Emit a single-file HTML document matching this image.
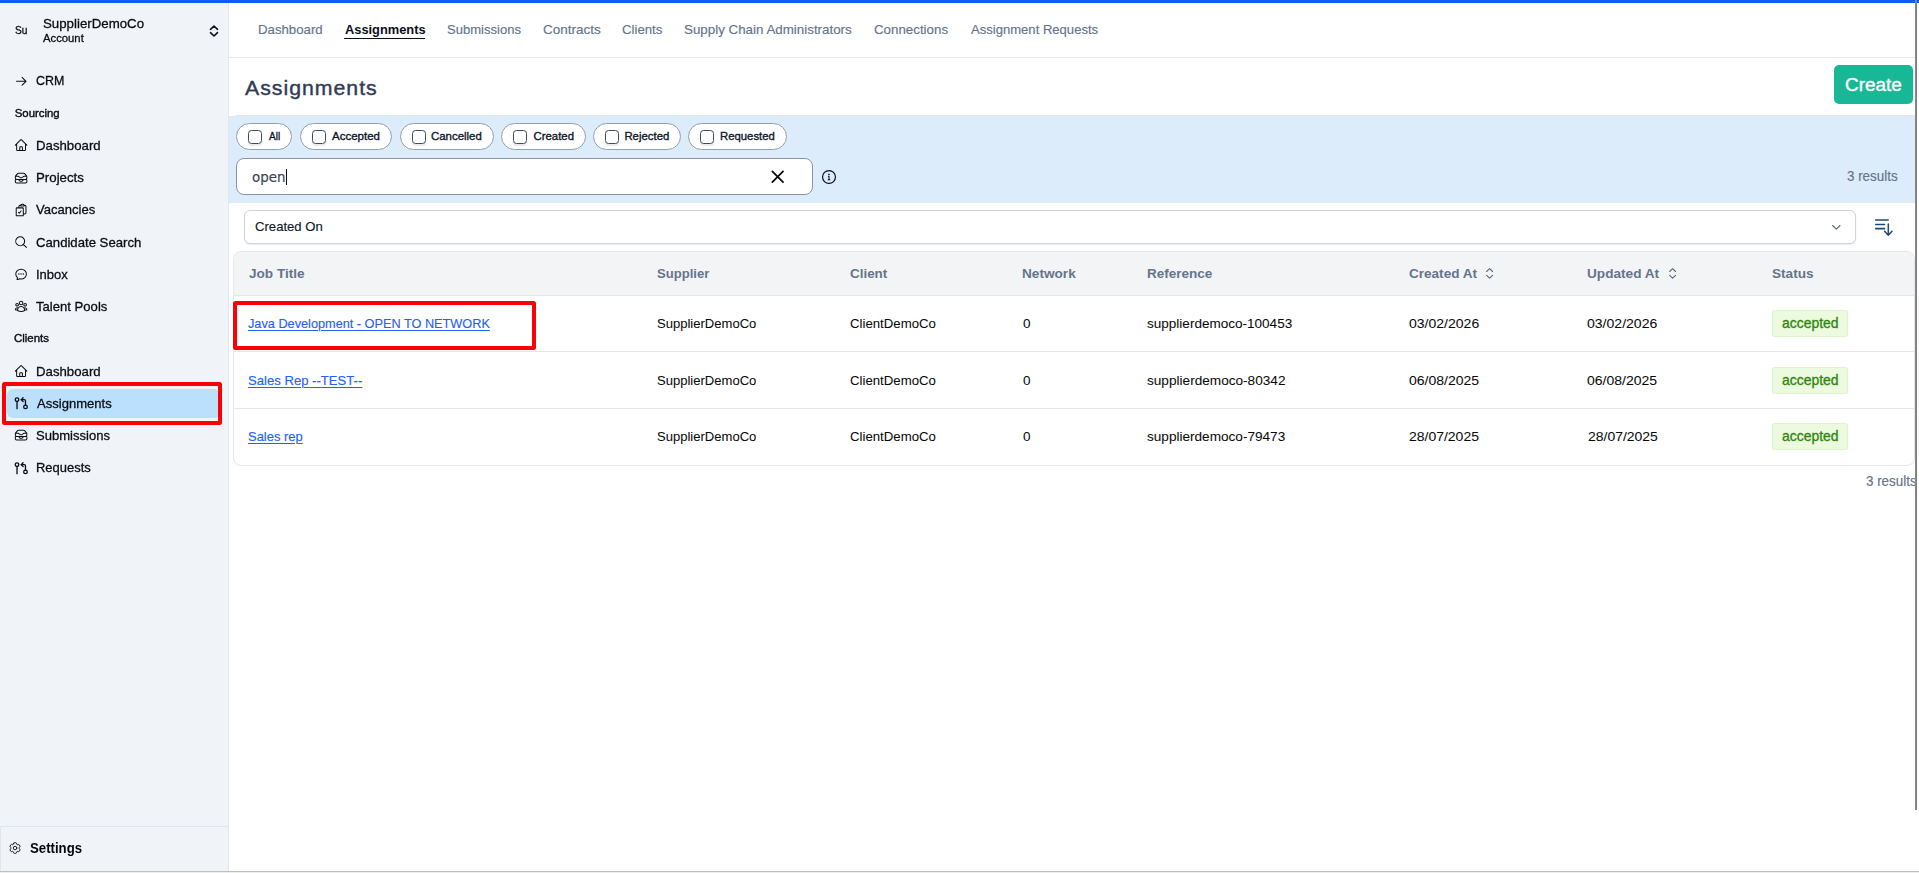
<!DOCTYPE html>
<html lang="en">
<head>
<meta charset="utf-8">
<title>Assignments</title>
<style>
*{box-sizing:border-box;margin:0;padding:0}
html,body{width:1919px;height:873px;overflow:hidden;background:#fff}
body{font-family:"Liberation Sans",sans-serif;color:#0f172a;position:relative}
.a,.t,svg{position:absolute}
.t{white-space:nowrap;z-index:4;transform-origin:0 0}
svg{overflow:visible;fill:none;stroke:currentColor;stroke-linecap:round;stroke-linejoin:round;z-index:3}
.chip{top:123px;height:26.8px;border:1px solid #939eb2;border-radius:14px;background:#fff}
.chip i{position:absolute;left:11px;top:6px;width:14px;height:14px;border:1.1px solid #414c5e;border-radius:3.5px;background:#fff;box-shadow:0 1.5px 1.5px rgba(30,41,59,.10)}
.badge{left:1772px;width:76px;height:26.7px;background:#ecfae0;border:1px solid #def5cf;border-radius:2px}
.hl{border:4.4px solid #fd0005;border-radius:2.5px;z-index:4}
.row{left:233px;width:1682px;height:1px;background:#e5e7eb}
</style>
</head>
<body>
<!-- chrome -->
<div class="a" style="left:0;top:0;width:228.8px;height:871px;background:#f0f4f9;border-right:1.5px solid #e4e7ed"></div>
<div class="a" style="left:0;top:0;width:1919px;height:3px;background:#1457fa;z-index:5"></div>
<div class="a" style="left:1915.3px;top:0;width:1.9px;height:810px;background:linear-gradient(90deg,#8c8c8c,#7a7a7a);z-index:6"></div>
<div class="a" style="left:0;top:870.7px;width:1919px;height:1.2px;background:#c0c0c0"></div><div class="a" style="left:0;top:871.9px;width:1919px;height:1.1px;background:#eeeeee"></div>
<div class="a" style="left:229px;top:57px;width:1686px;height:1px;background:#e5e7eb"></div>
<div class="a" style="left:0;top:826px;width:228px;height:1px;background:#e1e6ee"></div>

<div class="a" style="left:0;top:827px;width:0.8px;height:44px;background:#e1e5ec"></div>
<!-- sidebar active + highlight -->
<div class="a" style="left:7px;top:389px;width:214px;height:28.7px;background:#bae0fd;border-radius:6px"></div>
<div class="a hl" style="left:2.3px;top:382.4px;width:219.5px;height:42.2px"></div>

<!-- nav underline -->
<div class="a" style="left:344px;top:37.5px;width:81px;height:1.2px;background:#0b0f19"></div>

<!-- create button -->
<div class="a" style="left:1834px;top:65px;width:79px;height:39px;background:#18b795;border-radius:5px"></div>

<!-- filter band -->
<div class="a" style="left:236px;top:115px;width:1679px;height:1px;background:#e3e5e9"></div>
<div class="a" style="left:229px;top:116px;width:1686px;height:87px;background:#dcecfb"></div>
<div class="a chip" style="left:236px;width:56px"><i></i></div>
<div class="a chip" style="left:300px;width:92px"><i></i></div>
<div class="a chip" style="left:400px;width:93.5px"><i></i></div>
<div class="a chip" style="left:501px;width:85px"><i></i></div>
<div class="a chip" style="left:593px;width:87.5px"><i></i></div>
<div class="a chip" style="left:688px;width:99px"><i></i></div>

<div class="a" style="left:236px;top:158px;width:577px;height:37px;background:#fff;border:1px solid #8a94a8;border-radius:8px"></div>
<div class="a" style="left:286px;top:168.5px;width:1px;height:16px;background:#111;z-index:3"></div>

<!-- select -->
<div class="a" style="left:244px;top:210px;width:1612px;height:33.5px;background:#fff;border:1px solid #cfd4dc;border-radius:6px;box-shadow:0 1px 1.5px rgba(0,0,0,.08)"></div>

<!-- table -->
<div class="a" style="left:233px;top:251px;width:1682px;height:214.5px;border:1px solid #e5e7eb;border-radius:8px;background:#fff;overflow:hidden">
  <div style="height:44px;background:#f3f4f6"></div>
</div>
<div class="a row" style="top:295px"></div>
<div class="a row" style="top:351px"></div>
<div class="a row" style="top:408px"></div>
<div class="a badge" style="top:310px"></div>
<div class="a badge" style="top:367px"></div>
<div class="a badge" style="top:423.1px"></div>
<div class="a hl" style="left:232.9px;top:301.4px;width:302.8px;height:48.2px"></div>

<div id="tx" style="position:absolute;left:0;top:0;width:228px;height:871px;overflow:hidden;will-change:transform;z-index:3">
<svg viewBox="0 0 24 24" style="left:14.70px;top:74.80px;width:12.6px;height:12.6px;color:#0b0d12;stroke-width:2.0"><path d="M13.5 4.5L21 12m0 0l-7.5 7.5M21 12H3"/></svg>
<svg viewBox="0 0 24 24" style="left:13.70px;top:137.70px;width:14.2px;height:14.2px;color:#0b0d12;stroke-width:1.7"><path d="M2.25 12l8.954-8.955c.44-.439 1.152-.439 1.591 0L21.75 12M4.5 9.75v10.125c0 .621.504 1.125 1.125 1.125H9.75v-4.875c0-.621.504-1.125 1.125-1.125h2.25c.621 0 1.125.504 1.125 1.125V21h4.125c.621 0 1.125-.504 1.125-1.125V9.75M8.25 21h8.25"/></svg>
<svg viewBox="0 0 24 24" style="left:13.70px;top:170.90px;width:14.2px;height:14.2px;color:#0b0d12;stroke-width:1.7"><path d="M7.875 14.25l1.214 1.942a2.25 2.25 0 001.908 1.058h2.006c.776 0 1.497-.4 1.908-1.058l1.214-1.942M2.41 9h4.636a2.25 2.25 0 011.872 1.002l.164.246a2.25 2.25 0 001.872 1.002h2.092a2.25 2.25 0 001.872-1.002l.164-.246A2.25 2.25 0 0116.954 9h4.636M2.41 9a2.25 2.25 0 00-.16.832V12a2.25 2.25 0 002.25 2.25h15A2.25 2.25 0 0021.75 12V9.832c0-.287-.055-.57-.16-.832M2.41 9a2.25 2.25 0 01.382-.632l3.285-3.832a2.25 2.25 0 011.708-.786h8.43c.657 0 1.281.287 1.709.786l3.284 3.832c.163.19.291.404.382.632M4.5 20.25h15A2.25 2.25 0 0021.75 18v-2.625c0-.621-.504-1.125-1.125-1.125H3.375c-.621 0-1.125.504-1.125 1.125V18a2.25 2.25 0 002.25 2.25z"/></svg>
<svg viewBox="0 0 24 24" style="left:13.70px;top:203.30px;width:14.2px;height:14.2px;color:#0b0d12;stroke-width:1.7"><path d="M11.35 3.836c-.065.21-.1.433-.1.664 0 .414.336.75.75.75h4.5a.75.75 0 00.75-.75 2.25 2.25 0 00-.1-.664m-5.8 0A2.251 2.251 0 0113.5 2.25H15c1.012 0 1.867.668 2.15 1.586m-5.8 0c-.376.023-.75.05-1.124.08C9.095 4.01 8.25 4.973 8.25 6.108V8.25m8.9-4.414c.376.023.75.05 1.124.08 1.131.094 1.976 1.057 1.976 2.192V16.5A2.25 2.25 0 0118 18.75h-2.25m-7.5-10.5H4.875c-.621 0-1.125.504-1.125 1.125v11.25c0 .621.504 1.125 1.125 1.125h9.75c.621 0 1.125-.504 1.125-1.125V18.75m-7.5-10.5h6.375c.621 0 1.125.504 1.125 1.125v9.375m-8.25-3l1.5 1.5 3-3.75"/></svg>
<svg viewBox="0 0 24 24" style="left:13.70px;top:234.50px;width:14.2px;height:14.2px;color:#0b0d12;stroke-width:1.7"><path d="M21 21l-5.197-5.197m0 0A7.5 7.5 0 105.196 5.196a7.5 7.5 0 0010.607 10.607z"/></svg>
<svg viewBox="0 0 24 24" style="left:13.70px;top:266.70px;width:14.2px;height:14.2px;color:#0b0d12;stroke-width:1.7"><path d="M8.625 12a.375.375 0 11-.75 0 .375.375 0 01.75 0zm0 0H8.25m4.125 0a.375.375 0 11-.75 0 .375.375 0 01.75 0zm0 0H12m4.125 0a.375.375 0 11-.75 0 .375.375 0 01.75 0zm0 0h-.375M21 12c0 4.556-4.03 8.25-9 8.25a9.764 9.764 0 01-2.555-.337A5.972 5.972 0 015.41 20.97a5.969 5.969 0 01-.474-.065 4.48 4.48 0 00.978-2.025c.09-.457-.133-.901-.467-1.226C3.93 16.178 3 14.189 3 12c0-4.556 4.03-8.25 9-8.25s9 3.694 9 8.25z"/></svg>
<svg viewBox="0 0 24 24" style="left:13.70px;top:298.80px;width:14.2px;height:14.2px;color:#0b0d12;stroke-width:1.7"><path d="M18 18.72a9.094 9.094 0 003.741-.479 3 3 0 00-4.682-2.72m.94 3.198l.001.031c0 .225-.012.447-.037.666A11.944 11.944 0 0112 21c-2.17 0-4.207-.576-5.963-1.584A6.062 6.062 0 016 18.719m12 0a5.971 5.971 0 00-.941-3.197m0 0A5.995 5.995 0 0012 12.75a5.995 5.995 0 00-5.058 2.772m0 0a3 3 0 00-4.681 2.72 8.986 8.986 0 003.74.477m.94-3.197a5.971 5.971 0 00-.94 3.197M15 6.75a3 3 0 11-6 0 3 3 0 016 0zm6 3a2.25 2.25 0 11-4.5 0 2.25 2.25 0 014.5 0zm-13.5 0a2.25 2.25 0 11-4.5 0 2.25 2.25 0 014.5 0z"/></svg>
<svg viewBox="0 0 24 24" style="left:13.70px;top:363.80px;width:14.2px;height:14.2px;color:#0b0d12;stroke-width:1.7"><path d="M2.25 12l8.954-8.955c.44-.439 1.152-.439 1.591 0L21.75 12M4.5 9.75v10.125c0 .621.504 1.125 1.125 1.125H9.75v-4.875c0-.621.504-1.125 1.125-1.125h2.25c.621 0 1.125.504 1.125 1.125V21h4.125c.621 0 1.125-.504 1.125-1.125V9.75M8.25 21h8.25"/></svg>
<svg viewBox="0 0 24 24" style="left:14.25px;top:396.15px;width:14.5px;height:14.5px;color:#0b0d12;stroke-width:2.2"><circle cx="5" cy="6" r="3"/><path d="M5 9v12"/><circle cx="19" cy="18" r="3"/><path d="m15 9-3-3 3-3"/><path d="M12 6h5a2 2 0 0 1 2 2v7"/></svg>
<svg viewBox="0 0 24 24" style="left:13.70px;top:428.00px;width:14.2px;height:14.2px;color:#0b0d12;stroke-width:1.7"><path d="M7.875 14.25l1.214 1.942a2.25 2.25 0 001.908 1.058h2.006c.776 0 1.497-.4 1.908-1.058l1.214-1.942M2.41 9h4.636a2.25 2.25 0 011.872 1.002l.164.246a2.25 2.25 0 001.872 1.002h2.092a2.25 2.25 0 001.872-1.002l.164-.246A2.25 2.25 0 0116.954 9h4.636M2.41 9a2.25 2.25 0 00-.16.832V12a2.25 2.25 0 002.25 2.25h15A2.25 2.25 0 0021.75 12V9.832c0-.287-.055-.57-.16-.832M2.41 9a2.25 2.25 0 01.382-.632l3.285-3.832a2.25 2.25 0 011.708-.786h8.43c.657 0 1.281.287 1.709.786l3.284 3.832c.163.19.291.404.382.632M4.5 20.25h15A2.25 2.25 0 0021.75 18v-2.625c0-.621-.504-1.125-1.125-1.125H3.375c-.621 0-1.125.504-1.125 1.125V18a2.25 2.25 0 002.25 2.25z"/></svg>
<svg viewBox="0 0 24 24" style="left:14.25px;top:460.85px;width:14.5px;height:14.5px;color:#0b0d12;stroke-width:2.2"><circle cx="5" cy="6" r="3"/><path d="M5 9v12"/><circle cx="19" cy="18" r="3"/><path d="m15 9-3-3 3-3"/><path d="M12 6h5a2 2 0 0 1 2 2v7"/></svg>
<svg viewBox="0 0 24 24" style="left:8.20px;top:840.95px;width:14.1px;height:14.1px;color:#0b0d12;stroke-width:1.6"><path d="M9.594 3.94c.09-.542.56-.94 1.11-.94h2.593c.55 0 1.02.398 1.11.94l.213 1.281c.063.374.313.686.645.87.074.04.147.083.22.127.324.196.72.257 1.075.124l1.217-.456a1.125 1.125 0 011.37.49l1.296 2.247a1.125 1.125 0 01-.26 1.431l-1.003.827c-.293.24-.438.613-.431.992a6.759 6.759 0 010 .255c-.007.378.138.75.43.99l1.005.828c.424.35.534.954.26 1.43l-1.298 2.247a1.125 1.125 0 01-1.369.491l-1.217-.456c-.355-.133-.75-.072-1.076.124a6.57 6.57 0 01-.22.128c-.331.183-.581.495-.644.869l-.213 1.28c-.09.543-.56.941-1.11.941h-2.594c-.55 0-1.02-.398-1.11-.94l-.213-1.281c-.062-.374-.312-.686-.644-.87a6.52 6.52 0 01-.22-.127c-.325-.196-.72-.257-1.076-.124l-1.217.456a1.125 1.125 0 01-1.369-.49l-1.297-2.247a1.125 1.125 0 01.26-1.431l1.004-.827c.292-.24.437-.613.43-.992a6.932 6.932 0 010-.255c.007-.378-.138-.75-.43-.99l-1.004-.828a1.125 1.125 0 01-.26-1.43l1.297-2.247a1.125 1.125 0 011.37-.491l1.216.456c.356.133.751.072 1.076-.124.072-.044.146-.087.22-.128.332-.183.582-.495.644-.869l.214-1.281z M15 12a3 3 0 11-6 0 3 3 0 016 0z"/></svg>
<svg viewBox="0 0 10 12" style="left:209.3px;top:25.2px;width:10px;height:12px;color:#0b0f19;stroke-width:1.6"><path d="M1.5 4.3 5 1 8.5 4.3M1.5 7.7 5 11 8.5 7.7"/></svg>
<div class="t" style='left:15.00px;top:24.75px;font-size:10.9px;line-height:10.9px;color:#0b0d12;font-family:"Liberation Sans",sans-serif;transform:scaleX(0.9342);-webkit-text-stroke:0.3px #0b0d12;'>Su</div>
<div class="t" style='left:42.65px;top:17.00px;font-size:13.5px;line-height:13.5px;color:#0b0d12;font-family:"Liberation Sans",sans-serif;transform:scaleX(0.9829);-webkit-text-stroke:0.3px #0b0d12;'>SupplierDemoCo</div>
<div class="t" style='left:43.15px;top:32.80px;font-size:11.4px;line-height:11.4px;color:#0b0d12;font-family:"Liberation Sans",sans-serif;transform:scaleX(0.9904);-webkit-text-stroke:0.3px #0b0d12;'>Account</div>
<div class="t" style='left:36.05px;top:74.00px;font-size:13.5px;line-height:13.5px;color:#0b0d12;font-family:"Liberation Sans",sans-serif;transform:scaleX(0.9239);-webkit-text-stroke:0.3px #0b0d12;'>CRM</div>
<div class="t" style='left:14.75px;top:108.20px;font-size:11.4px;line-height:11.4px;color:#0b0d12;font-family:"Liberation Sans",sans-serif;-webkit-text-stroke:0.4px #0b0d12;'>Sourcing</div>
<div class="t" style='left:35.95px;top:139.10px;font-size:13.5px;line-height:13.5px;color:#0b0d12;font-family:"Liberation Sans",sans-serif;transform:scaleX(0.9790);-webkit-text-stroke:0.3px #0b0d12;'>Dashboard</div>
<div class="t" style='left:35.95px;top:171.10px;font-size:13.5px;line-height:13.5px;color:#0b0d12;font-family:"Liberation Sans",sans-serif;transform:scaleX(0.9830);-webkit-text-stroke:0.3px #0b0d12;'>Projects</div>
<div class="t" style='left:36.15px;top:203.10px;font-size:13.5px;line-height:13.5px;color:#0b0d12;font-family:"Liberation Sans",sans-serif;transform:scaleX(0.9667);-webkit-text-stroke:0.3px #0b0d12;'>Vacancies</div>
<div class="t" style='left:35.65px;top:235.60px;font-size:13.5px;line-height:13.5px;color:#0b0d12;font-family:"Liberation Sans",sans-serif;transform:scaleX(0.9743);-webkit-text-stroke:0.3px #0b0d12;'>Candidate Search</div>
<div class="t" style='left:35.95px;top:267.80px;font-size:13.5px;line-height:13.5px;color:#0b0d12;font-family:"Liberation Sans",sans-serif;transform:scaleX(0.9643);-webkit-text-stroke:0.3px #0b0d12;'>Inbox</div>
<div class="t" style='left:36.40px;top:299.90px;font-size:13.5px;line-height:13.5px;color:#0b0d12;font-family:"Liberation Sans",sans-serif;transform:scaleX(0.9701);-webkit-text-stroke:0.3px #0b0d12;'>Talent Pools</div>
<div class="t" style='left:14.25px;top:332.60px;font-size:11.4px;line-height:11.4px;color:#0b0d12;font-family:"Liberation Sans",sans-serif;transform:scaleX(1.0050);-webkit-text-stroke:0.4px #0b0d12;'>Clients</div>
<div class="t" style='left:35.95px;top:365.00px;font-size:13.5px;line-height:13.5px;color:#0b0d12;font-family:"Liberation Sans",sans-serif;transform:scaleX(0.9790);-webkit-text-stroke:0.3px #0b0d12;'>Dashboard</div>
<div class="t" style='left:36.55px;top:397.00px;font-size:13.5px;line-height:13.5px;color:#0b0d12;font-family:"Liberation Sans",sans-serif;transform:scaleX(0.9671);-webkit-text-stroke:0.3px #0b0d12;'>Assignments</div>
<div class="t" style='left:36.45px;top:429.00px;font-size:13.5px;line-height:13.5px;color:#0b0d12;font-family:"Liberation Sans",sans-serif;transform:scaleX(0.9656);-webkit-text-stroke:0.3px #0b0d12;'>Submissions</div>
<div class="t" style='left:35.95px;top:460.90px;font-size:13.5px;line-height:13.5px;color:#0b0d12;font-family:"Liberation Sans",sans-serif;transform:scaleX(0.9598);-webkit-text-stroke:0.3px #0b0d12;'>Requests</div>
<div class="t" style='left:30.45px;top:841.00px;font-size:14.4px;line-height:14.4px;color:#050608;font-family:"Liberation Sans",sans-serif;font-weight:bold;transform:scaleX(0.9167);'>Settings</div>
</div>
<svg viewBox="0 0 24 24" style="left:767.00px;top:165.90px;width:21.4px;height:21.4px;color:#050505;stroke-width:1.9"><path d="M6 18L18 6M6 6l12 12"/></svg>
<svg viewBox="0 0 16 16" style="left:821px;top:168.9px;width:16px;height:16px;color:#0b0f19;stroke-width:1.2"><circle cx="8" cy="8" r="6.45"/><path d="M7.4 7.3H8v3.4M7.2 10.8h1.7" stroke-width="1.05"/><circle cx="7.9" cy="5.3" r=".5" fill="currentColor" stroke-width=".5"/></svg>
<svg viewBox="0 0 10 6" style="left:1831.8px;top:224.8px;width:8.6px;height:5px;color:#5f6673;stroke-width:1.35"><path d="M.6.6 5 5 9.4.6"/></svg>
<svg viewBox="0 0 20 18" style="left:1874px;top:218px;width:20px;height:18px;color:#1f4a6e;stroke-width:1.55;stroke-linecap:butt"><path d="M1.1 1.9H14.8M1.1 6.4H11.2M1.1 10.6H11.2" /><path d="M14.3 6v11M10.6 13.3l3.7 3.9 3.7-3.9" stroke-width="1.5" stroke-linecap="round"/></svg>
<svg viewBox="0 0 8 12" style="left:1486.4px;top:267.5px;width:7.2px;height:10.8px;color:#5b677a;stroke-width:1.2"><path d="M.7 3.9 4 .7 7.3 3.9M.7 8.1 4 11.3 7.3 8.1"/></svg>
<svg viewBox="0 0 8 12" style="left:1669.1px;top:267.5px;width:7.2px;height:10.8px;color:#5b677a;stroke-width:1.2"><path d="M.7 3.9 4 .7 7.3 3.9M.7 8.1 4 11.3 7.3 8.1"/></svg>
<div class="t" style='left:257.55px;top:22.90px;font-size:13.5px;line-height:13.5px;color:#64748b;font-family:"Liberation Sans",sans-serif;transform:scaleX(0.9790);-webkit-text-stroke:0.15px #64748b;'>Dashboard</div>
<div class="t" style='left:344.80px;top:22.90px;font-size:13.5px;line-height:13.5px;color:#0b0f19;font-family:"Liberation Sans",sans-serif;font-weight:bold;transform:scaleX(0.9507);'>Assignments</div>
<div class="t" style='left:447.05px;top:22.90px;font-size:13.5px;line-height:13.5px;color:#64748b;font-family:"Liberation Sans",sans-serif;transform:scaleX(0.9656);-webkit-text-stroke:0.15px #64748b;'>Submissions</div>
<div class="t" style='left:542.55px;top:22.90px;font-size:13.5px;line-height:13.5px;color:#64748b;font-family:"Liberation Sans",sans-serif;transform:scaleX(1.0012);-webkit-text-stroke:0.15px #64748b;'>Contracts</div>
<div class="t" style='left:622.05px;top:22.90px;font-size:13.5px;line-height:13.5px;color:#64748b;font-family:"Liberation Sans",sans-serif;transform:scaleX(0.9790);-webkit-text-stroke:0.15px #64748b;'>Clients</div>
<div class="t" style='left:684.25px;top:22.90px;font-size:13.5px;line-height:13.5px;color:#64748b;font-family:"Liberation Sans",sans-serif;transform:scaleX(0.9891);-webkit-text-stroke:0.15px #64748b;'>Supply Chain Administrators</div>
<div class="t" style='left:874.25px;top:22.90px;font-size:13.5px;line-height:13.5px;color:#64748b;font-family:"Liberation Sans",sans-serif;transform:scaleX(0.9865);-webkit-text-stroke:0.15px #64748b;'>Connections</div>
<div class="t" style='left:970.75px;top:22.90px;font-size:13.5px;line-height:13.5px;color:#64748b;font-family:"Liberation Sans",sans-serif;transform:scaleX(0.9678);-webkit-text-stroke:0.15px #64748b;'>Assignment Requests</div>
<div class="t" style='left:244.50px;top:77.70px;font-size:20px;line-height:20px;color:#303c54;font-family:"Liberation Sans",sans-serif;letter-spacing:0.941px;transform:scaleX(1.0630);-webkit-text-stroke:0.4px #303c54;'>Assignments</div>
<div class="t" style='left:1845.10px;top:75.90px;font-size:18px;line-height:18px;color:#ffffff;font-family:"Liberation Sans",sans-serif;transform:scaleX(1.0532);-webkit-text-stroke:0.35px #ffffff;z-index:3'>Create</div>
<div class="t" style='left:268.70px;top:131.00px;font-size:11.4px;line-height:11.4px;color:#0f172a;font-family:"Liberation Sans",sans-serif;transform:scaleX(0.8827);-webkit-text-stroke:0.35px #0f172a;z-index:3'>All</div>
<div class="t" style='left:331.90px;top:131.00px;font-size:11.4px;line-height:11.4px;color:#0f172a;font-family:"Liberation Sans",sans-serif;transform:scaleX(1.0096);-webkit-text-stroke:0.35px #0f172a;z-index:3'>Accepted</div>
<div class="t" style='left:430.80px;top:131.00px;font-size:11.4px;line-height:11.4px;color:#0f172a;font-family:"Liberation Sans",sans-serif;transform:scaleX(1.0035);-webkit-text-stroke:0.35px #0f172a;z-index:3'>Cancelled</div>
<div class="t" style='left:533.45px;top:131.00px;font-size:11.4px;line-height:11.4px;color:#0f172a;font-family:"Liberation Sans",sans-serif;-webkit-text-stroke:0.35px #0f172a;z-index:3'>Created</div>
<div class="t" style='left:624.40px;top:131.00px;font-size:11.4px;line-height:11.4px;color:#0f172a;font-family:"Liberation Sans",sans-serif;-webkit-text-stroke:0.35px #0f172a;z-index:3'>Rejected</div>
<div class="t" style='left:720.30px;top:131.00px;font-size:11.4px;line-height:11.4px;color:#0f172a;font-family:"Liberation Sans",sans-serif;transform:scaleX(0.9944);-webkit-text-stroke:0.35px #0f172a;z-index:3'>Requested</div>
<div class="t" style='left:252.30px;top:170.50px;font-size:13.9px;line-height:13.9px;color:#3b4453;font-family:"DejaVu Sans","Liberation Sans",sans-serif;transform:scaleX(0.9655);-webkit-text-stroke:0.15px #3b4453;z-index:3'>open</div>
<div class="t" style='left:1847.45px;top:170.10px;font-size:13.9px;line-height:13.9px;color:#64748b;font-family:"Liberation Sans",sans-serif;transform:scaleX(0.9638);-webkit-text-stroke:0.15px #64748b;'>3 results</div>
<div class="t" style='left:255.45px;top:219.90px;font-size:13.5px;line-height:13.5px;color:#111827;font-family:"Liberation Sans",sans-serif;transform:scaleX(0.9714);-webkit-text-stroke:0.15px #111827;z-index:3'>Created On</div>
<div class="t" style='left:248.80px;top:267.00px;font-size:13.5px;line-height:13.5px;color:#64748b;font-family:"Liberation Sans",sans-serif;font-weight:bold;transform:scaleX(1.0070);z-index:3'>Job Title</div>
<div class="t" style='left:657.05px;top:267.00px;font-size:13.5px;line-height:13.5px;color:#64748b;font-family:"Liberation Sans",sans-serif;font-weight:bold;transform:scaleX(0.9683);z-index:3'>Supplier</div>
<div class="t" style='left:850.17px;top:267.00px;font-size:13.5px;line-height:13.5px;color:#64748b;font-family:"Liberation Sans",sans-serif;font-weight:bold;transform:scaleX(0.9943);z-index:3'>Client</div>
<div class="t" style='left:1022.35px;top:267.00px;font-size:13.5px;line-height:13.5px;color:#64748b;font-family:"Liberation Sans",sans-serif;font-weight:bold;transform:scaleX(1.0082);z-index:3'>Network</div>
<div class="t" style='left:1146.55px;top:267.00px;font-size:13.5px;line-height:13.5px;color:#64748b;font-family:"Liberation Sans",sans-serif;font-weight:bold;transform:scaleX(1.0016);z-index:3'>Reference</div>
<div class="t" style='left:1408.65px;top:267.00px;font-size:13.5px;line-height:13.5px;color:#64748b;font-family:"Liberation Sans",sans-serif;font-weight:bold;transform:scaleX(1.0035);z-index:3'>Created At</div>
<div class="t" style='left:1587.30px;top:267.00px;font-size:13.5px;line-height:13.5px;color:#64748b;font-family:"Liberation Sans",sans-serif;font-weight:bold;transform:scaleX(1.0084);z-index:3'>Updated At</div>
<div class="t" style='left:1772.45px;top:267.00px;font-size:13.5px;line-height:13.5px;color:#64748b;font-family:"Liberation Sans",sans-serif;font-weight:bold;transform:scaleX(1.0069);z-index:3'>Status</div>
<div class="t" style='left:248.20px;top:316.80px;font-size:13.5px;line-height:13.5px;color:#1f62f5;font-family:"Liberation Sans",sans-serif;transform:scaleX(0.9419);-webkit-text-stroke:0.15px #1f62f5;z-index:3;text-decoration:underline;text-decoration-thickness:1px;text-underline-offset:1.6px'>Java Development - OPEN TO NETWORK</div>
<div class="t" style='left:657.05px;top:316.80px;font-size:13.5px;line-height:13.5px;color:#0a0a0a;font-family:"Liberation Sans",sans-serif;transform:scaleX(0.9663);-webkit-text-stroke:0.05px #0a0a0a;z-index:3'>SupplierDemoCo</div>
<div class="t" style='left:850.17px;top:316.80px;font-size:13.5px;line-height:13.5px;color:#0a0a0a;font-family:"Liberation Sans",sans-serif;transform:scaleX(0.9784);-webkit-text-stroke:0.05px #0a0a0a;z-index:3'>ClientDemoCo</div>
<div class="t" style='left:1022.85px;top:316.80px;font-size:13.5px;line-height:13.5px;color:#0a0a0a;font-family:"Liberation Sans",sans-serif;transform:scaleX(0.9988);-webkit-text-stroke:0.05px #0a0a0a;z-index:3'>0</div>
<div class="t" style='left:1146.65px;top:316.80px;font-size:13.5px;line-height:13.5px;color:#0a0a0a;font-family:"Liberation Sans",sans-serif;transform:scaleX(1.0024);-webkit-text-stroke:0.05px #0a0a0a;z-index:3'>supplierdemoco-100453</div>
<div class="t" style='left:1408.85px;top:316.80px;font-size:13.5px;line-height:13.5px;color:#0a0a0a;font-family:"Liberation Sans",sans-serif;transform:scaleX(1.0388);-webkit-text-stroke:0.05px #0a0a0a;z-index:3'>03/02/2026</div>
<div class="t" style='left:1587.45px;top:316.80px;font-size:13.5px;line-height:13.5px;color:#0a0a0a;font-family:"Liberation Sans",sans-serif;transform:scaleX(1.0403);-webkit-text-stroke:0.05px #0a0a0a;z-index:3'>03/02/2026</div>
<div class="t" style='left:1781.65px;top:316.80px;font-size:13.9px;line-height:13.9px;color:#2f8509;font-family:"Liberation Sans",sans-serif;transform:scaleX(1.0038);-webkit-text-stroke:0.3px #2f8509;z-index:3'>accepted</div>
<div class="t" style='left:248.45px;top:373.75px;font-size:13.5px;line-height:13.5px;color:#1f62f5;font-family:"Liberation Sans",sans-serif;transform:scaleX(0.9709);-webkit-text-stroke:0.15px #1f62f5;z-index:3;text-decoration:underline;text-decoration-thickness:1px;text-underline-offset:1.6px'>Sales Rep --TEST--</div>
<div class="t" style='left:657.05px;top:373.75px;font-size:13.5px;line-height:13.5px;color:#0a0a0a;font-family:"Liberation Sans",sans-serif;transform:scaleX(0.9663);-webkit-text-stroke:0.05px #0a0a0a;z-index:3'>SupplierDemoCo</div>
<div class="t" style='left:850.17px;top:373.75px;font-size:13.5px;line-height:13.5px;color:#0a0a0a;font-family:"Liberation Sans",sans-serif;transform:scaleX(0.9784);-webkit-text-stroke:0.05px #0a0a0a;z-index:3'>ClientDemoCo</div>
<div class="t" style='left:1022.85px;top:373.75px;font-size:13.5px;line-height:13.5px;color:#0a0a0a;font-family:"Liberation Sans",sans-serif;transform:scaleX(0.9988);-webkit-text-stroke:0.05px #0a0a0a;z-index:3'>0</div>
<div class="t" style='left:1146.65px;top:373.75px;font-size:13.5px;line-height:13.5px;color:#0a0a0a;font-family:"Liberation Sans",sans-serif;transform:scaleX(1.0081);-webkit-text-stroke:0.05px #0a0a0a;z-index:3'>supplierdemoco-80342</div>
<div class="t" style='left:1408.85px;top:373.75px;font-size:13.5px;line-height:13.5px;color:#0a0a0a;font-family:"Liberation Sans",sans-serif;transform:scaleX(1.0381);-webkit-text-stroke:0.05px #0a0a0a;z-index:3'>06/08/2025</div>
<div class="t" style='left:1587.45px;top:373.75px;font-size:13.5px;line-height:13.5px;color:#0a0a0a;font-family:"Liberation Sans",sans-serif;transform:scaleX(1.0358);-webkit-text-stroke:0.05px #0a0a0a;z-index:3'>06/08/2025</div>
<div class="t" style='left:1781.65px;top:373.75px;font-size:13.9px;line-height:13.9px;color:#2f8509;font-family:"Liberation Sans",sans-serif;transform:scaleX(1.0038);-webkit-text-stroke:0.3px #2f8509;z-index:3'>accepted</div>
<div class="t" style='left:248.45px;top:429.75px;font-size:13.5px;line-height:13.5px;color:#1f62f5;font-family:"Liberation Sans",sans-serif;transform:scaleX(0.9589);-webkit-text-stroke:0.15px #1f62f5;z-index:3;text-decoration:underline;text-decoration-thickness:1px;text-underline-offset:1.6px'>Sales rep</div>
<div class="t" style='left:657.05px;top:429.75px;font-size:13.5px;line-height:13.5px;color:#0a0a0a;font-family:"Liberation Sans",sans-serif;transform:scaleX(0.9663);-webkit-text-stroke:0.05px #0a0a0a;z-index:3'>SupplierDemoCo</div>
<div class="t" style='left:850.17px;top:429.75px;font-size:13.5px;line-height:13.5px;color:#0a0a0a;font-family:"Liberation Sans",sans-serif;transform:scaleX(0.9784);-webkit-text-stroke:0.05px #0a0a0a;z-index:3'>ClientDemoCo</div>
<div class="t" style='left:1022.85px;top:429.75px;font-size:13.5px;line-height:13.5px;color:#0a0a0a;font-family:"Liberation Sans",sans-serif;transform:scaleX(0.9988);-webkit-text-stroke:0.05px #0a0a0a;z-index:3'>0</div>
<div class="t" style='left:1146.65px;top:429.75px;font-size:13.5px;line-height:13.5px;color:#0a0a0a;font-family:"Liberation Sans",sans-serif;transform:scaleX(1.0062);-webkit-text-stroke:0.05px #0a0a0a;z-index:3'>supplierdemoco-79473</div>
<div class="t" style='left:1409.10px;top:429.75px;font-size:13.5px;line-height:13.5px;color:#0a0a0a;font-family:"Liberation Sans",sans-serif;transform:scaleX(1.0351);-webkit-text-stroke:0.05px #0a0a0a;z-index:3'>28/07/2025</div>
<div class="t" style='left:1587.70px;top:429.75px;font-size:13.5px;line-height:13.5px;color:#0a0a0a;font-family:"Liberation Sans",sans-serif;transform:scaleX(1.0329);-webkit-text-stroke:0.05px #0a0a0a;z-index:3'>28/07/2025</div>
<div class="t" style='left:1781.65px;top:429.75px;font-size:13.9px;line-height:13.9px;color:#2f8509;font-family:"Liberation Sans",sans-serif;transform:scaleX(1.0038);-webkit-text-stroke:0.3px #2f8509;z-index:3'>accepted</div>
<div class="t" style='left:1865.65px;top:474.90px;font-size:13.9px;line-height:13.9px;color:#64748b;font-family:"Liberation Sans",sans-serif;transform:scaleX(0.9638);-webkit-text-stroke:0.15px #64748b;'>3 results</div>
</body>
</html>
